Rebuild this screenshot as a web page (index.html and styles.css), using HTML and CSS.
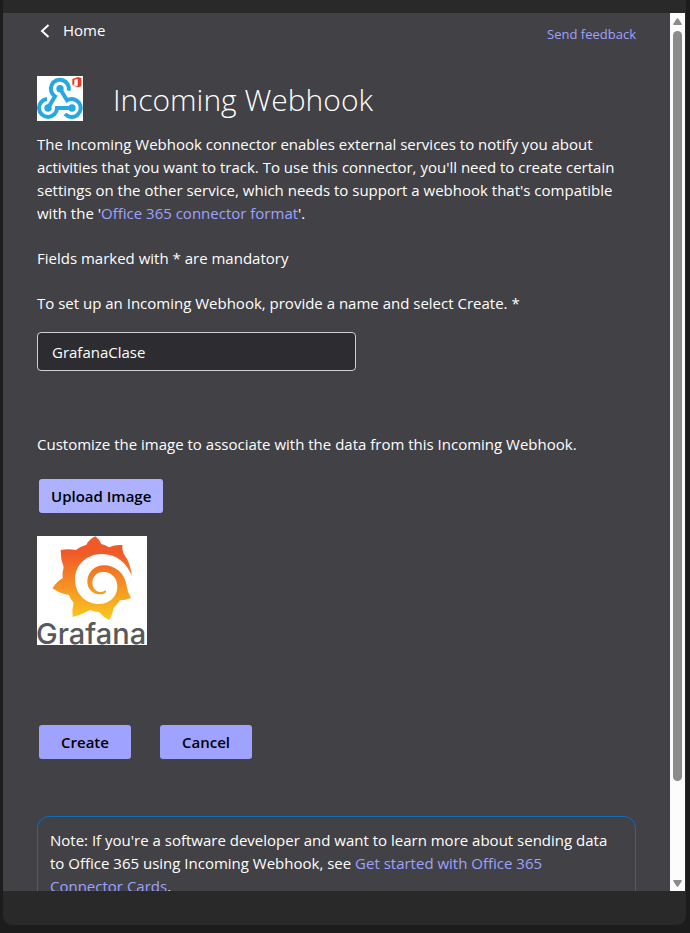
FILE: index.html
```html
<!DOCTYPE html>
<html lang="en">
<head>
<meta charset="utf-8">
<title>Incoming Webhook</title>
<link rel="stylesheet" href="styles.css">
</head>
<body>
<div class="dialog">
  <div class="viewport">
    <main class="content">
      <nav class="topbar">
        <a class="home" href="#">
          <svg class="chevron" viewBox="0 0 10 14" aria-hidden="true"><path d="M8.500 1 2 7l6.500 6"/></svg>
          Home
        </a>
        <a class="feedback" href="#">Send feedback</a>
      </nav>

      <header class="heading">
        <svg class="logo" viewBox="0 0 138 135" aria-hidden="true">
          <path class="logo-bg" d="M0 0h138v135H0z"/>
          <g class="logo-line">
            <path d="M33 96 54 61A27 27 0 1 1 95 44"/>
            <path d="M69 38 90 73A27 27 0 1 1 84 114"/>
            <path d="M105 96H60A27 27 0 1 1 30 69"/>
          </g>
          <g class="logo-dot"><circle cx="69" cy="38" r="11"/><circle cx="33" cy="96" r="11"/><circle cx="105" cy="96" r="11"/></g>
          <path class="logo-office" fill-rule="evenodd" d="M106 9 123 3l10 3v25l-10 3-17-6 16 2V9l-10 2v14l-6 3z"/>
        </svg>
        <h1>Incoming Webhook</h1>
      </header>

      <p>The Incoming Webhook connector enables external services to notify you about activities that you want to track. To use this connector, you'll need to create certain settings on the other service, which needs to support a webhook that's compatible with the '<a href="#">Office 365 connector format</a>'.</p>
      <p>Fields marked with * are mandatory</p>

      <form>
        <label for="name">To set up an Incoming Webhook, provide a name and select Create. *</label>
        <input class="name" id="name" type="text" value="GrafanaClase">

        <p>Customize the image to associate with the data from this Incoming Webhook.</p>
        <button class="button upload" type="button">Upload Image</button>

        <svg class="picture" viewBox="0 0 330 327" role="img" aria-label="Grafana">
          <defs>
            <linearGradient id="flame" x1="0" y1="0" x2="0" y2="1">
              <stop offset="0.200" stop-color="#f05a28"/>
              <stop offset="1" stop-color="#fbca1e"/>
            </linearGradient>
          </defs>
          <path fill="#fff" d="M0 0h330v327H0z"/>
          <g transform="translate(-21 -198)">
            <path fill="url(#flame)" d="M196 199Q207 207 214 222Q225 225 237 232Q255 223 277 225Q276 239 280 250Q303 280 306 322L290 348Q292 366 303 384Q289 391 270 391Q262 405 251 413Q248 433 238 450Q219 441 207 426Q192 426 180 420Q155 435 128 441Q125 420 131 398Q121 388 117 375Q89 370 67 355Q80 335 98 325Q96 309 101 292Q91 266 92 240Q115 235 138 240Q151 229 169 224Q178 207 196 199Z"/>
            <path fill="#fff" d="M307 322C291 278 260 252 215 252C170 252 135 285 135 328C135 370 165 402 205 402C240 402 262 378 262 350C262 325 245 306 220 306C200 306 187 320 187 338C187 355 200 366 213 366C221 366 224 361 228 362C230 369 219 373 210 373C188 373 172 356 172 335C172 308 193 286 222 286C255 286 285 310 290 348Z"/>
          </g>
          <text class="picture-name" x="-3" y="325">Grafana</text>
        </svg>

        <div class="actions">
          <button class="button" type="submit">Create</button>
          <button class="button" type="button">Cancel</button>
        </div>
      </form>

      <aside class="note">Note: If you're a software developer and want to learn more about sending data to Office 365 using Incoming Webhook, see <a href="#">Get started with Office 365 Connector Cards</a>.</aside>
    </main>

    <div class="scrollbar" aria-hidden="true">
      <svg class="arrow" viewBox="0 0 9 7"><path d="M3.600.800Q4.500-.400 5.400.800L8.800 6Q9 7 8 7H1Q0 7 .200 6z"/></svg>
      <div class="track"><div class="thumb"></div></div>
      <svg class="arrow" viewBox="0 0 9 7"><path d="M3.600 6.200Q4.500 7.400 5.400 6.200L8.800 1Q9 0 8 0H1Q0 0 .200 1z"/></svg>
    </div>
  </div>
</div>
</body>
</html>
```
FILE: styles.css
```css
* {
  box-sizing: border-box;
}

body {
  margin: 0;
  height: 100vh;
  overflow: hidden;
  padding: 0 4px 8px 3px;
  background: #1c1c1c;
  color: #fff;
  font: 15px/23px "Open Sans", "Noto Sans", sans-serif;
}

a {
  color: #9ea2ff;
  text-decoration: none;
}

p {
  margin: 0 0 22px;
}

.dialog {
  height: 100%;
  padding: 13px 1px 34px 0;
  border-radius: 0 0 9px 9px;
  background: #292929;
}

.viewport {
  display: flex;
  height: 100%;
  overflow: hidden;
  background: #424145;
}

.content {
  flex: 1;
  min-width: 0;
  padding: 6px 34px 0;
}

.topbar {
  display: flex;
  justify-content: space-between;
  margin-bottom: 30px;
}

.home {
  display: flex;
  align-items: center;
  gap: 13px;
  height: 23px;
  padding-left: 3px;
  color: #fff;
}

.chevron {
  width: 10px;
  height: 14px;
  fill: none;
  stroke: #fff;
  stroke-width: 2;
}

.feedback {
  padding-top: 4px;
  font-size: 13px;
}

.heading {
  display: flex;
  align-items: flex-start;
  gap: 30px;
  margin-bottom: 9px;
}

.logo {
  width: 46px;
  height: 45px;
}

.logo-bg {
  fill: #fff;
}

.logo-line {
  fill: none;
  stroke: #27a8e0;
  stroke-width: 12;
}

.logo-dot {
  fill: #27a8e0;
}

.logo-office {
  fill: #eb3c17;
}

h1 {
  margin: 0;
  font-size: 30px;
  font-weight: 300;
  line-height: 48px;
}

label {
  display: block;
}

.name {
  display: block;
  width: 319px;
  max-width: 100%;
  height: 39px;
  margin: 17px 0 62px;
  padding: 0 14px;
  border: 1px solid #d0d0d0;
  border-radius: 4px;
  background: #2d2c30;
  color: #fff;
  font: inherit;
}

.button {
  min-width: 92px;
  height: 34px;
  padding: 0 12px;
  border: 0;
  border-radius: 3px;
  background: #9fa3ff;
  color: #000;
  font: 600 15px/23px "Open Sans", "Noto Sans", sans-serif;
}

.upload {
  display: block;
  margin: 23px 2px;
  background: #adb1ff;
}

.picture {
  display: block;
  width: 110px;
  height: 109px;
}

.picture-name {
  fill: #58595b;
  font: 500 87px Inter, sans-serif;
}

.actions {
  display: flex;
  gap: 29px;
  margin: 80px 2px 57px;
}

.note {
  padding: 12px 22px 12px 12px;
  border: 1px solid #0f6cbd;
  border-radius: 12px;
}

.scrollbar {
  display: flex;
  flex-direction: column;
  align-items: center;
  gap: 6px;
  width: 15px;
  padding: 5px 0 4px;
  background: #fcfcfc;
}

.arrow {
  width: 9px;
  height: 7px;
  fill: #8b8b8b;
}

.track {
  flex: 1;
}

.thumb {
  width: 9px;
  height: 89%;
  border-radius: 5px;
  background: #8b8b8b;
}
```
